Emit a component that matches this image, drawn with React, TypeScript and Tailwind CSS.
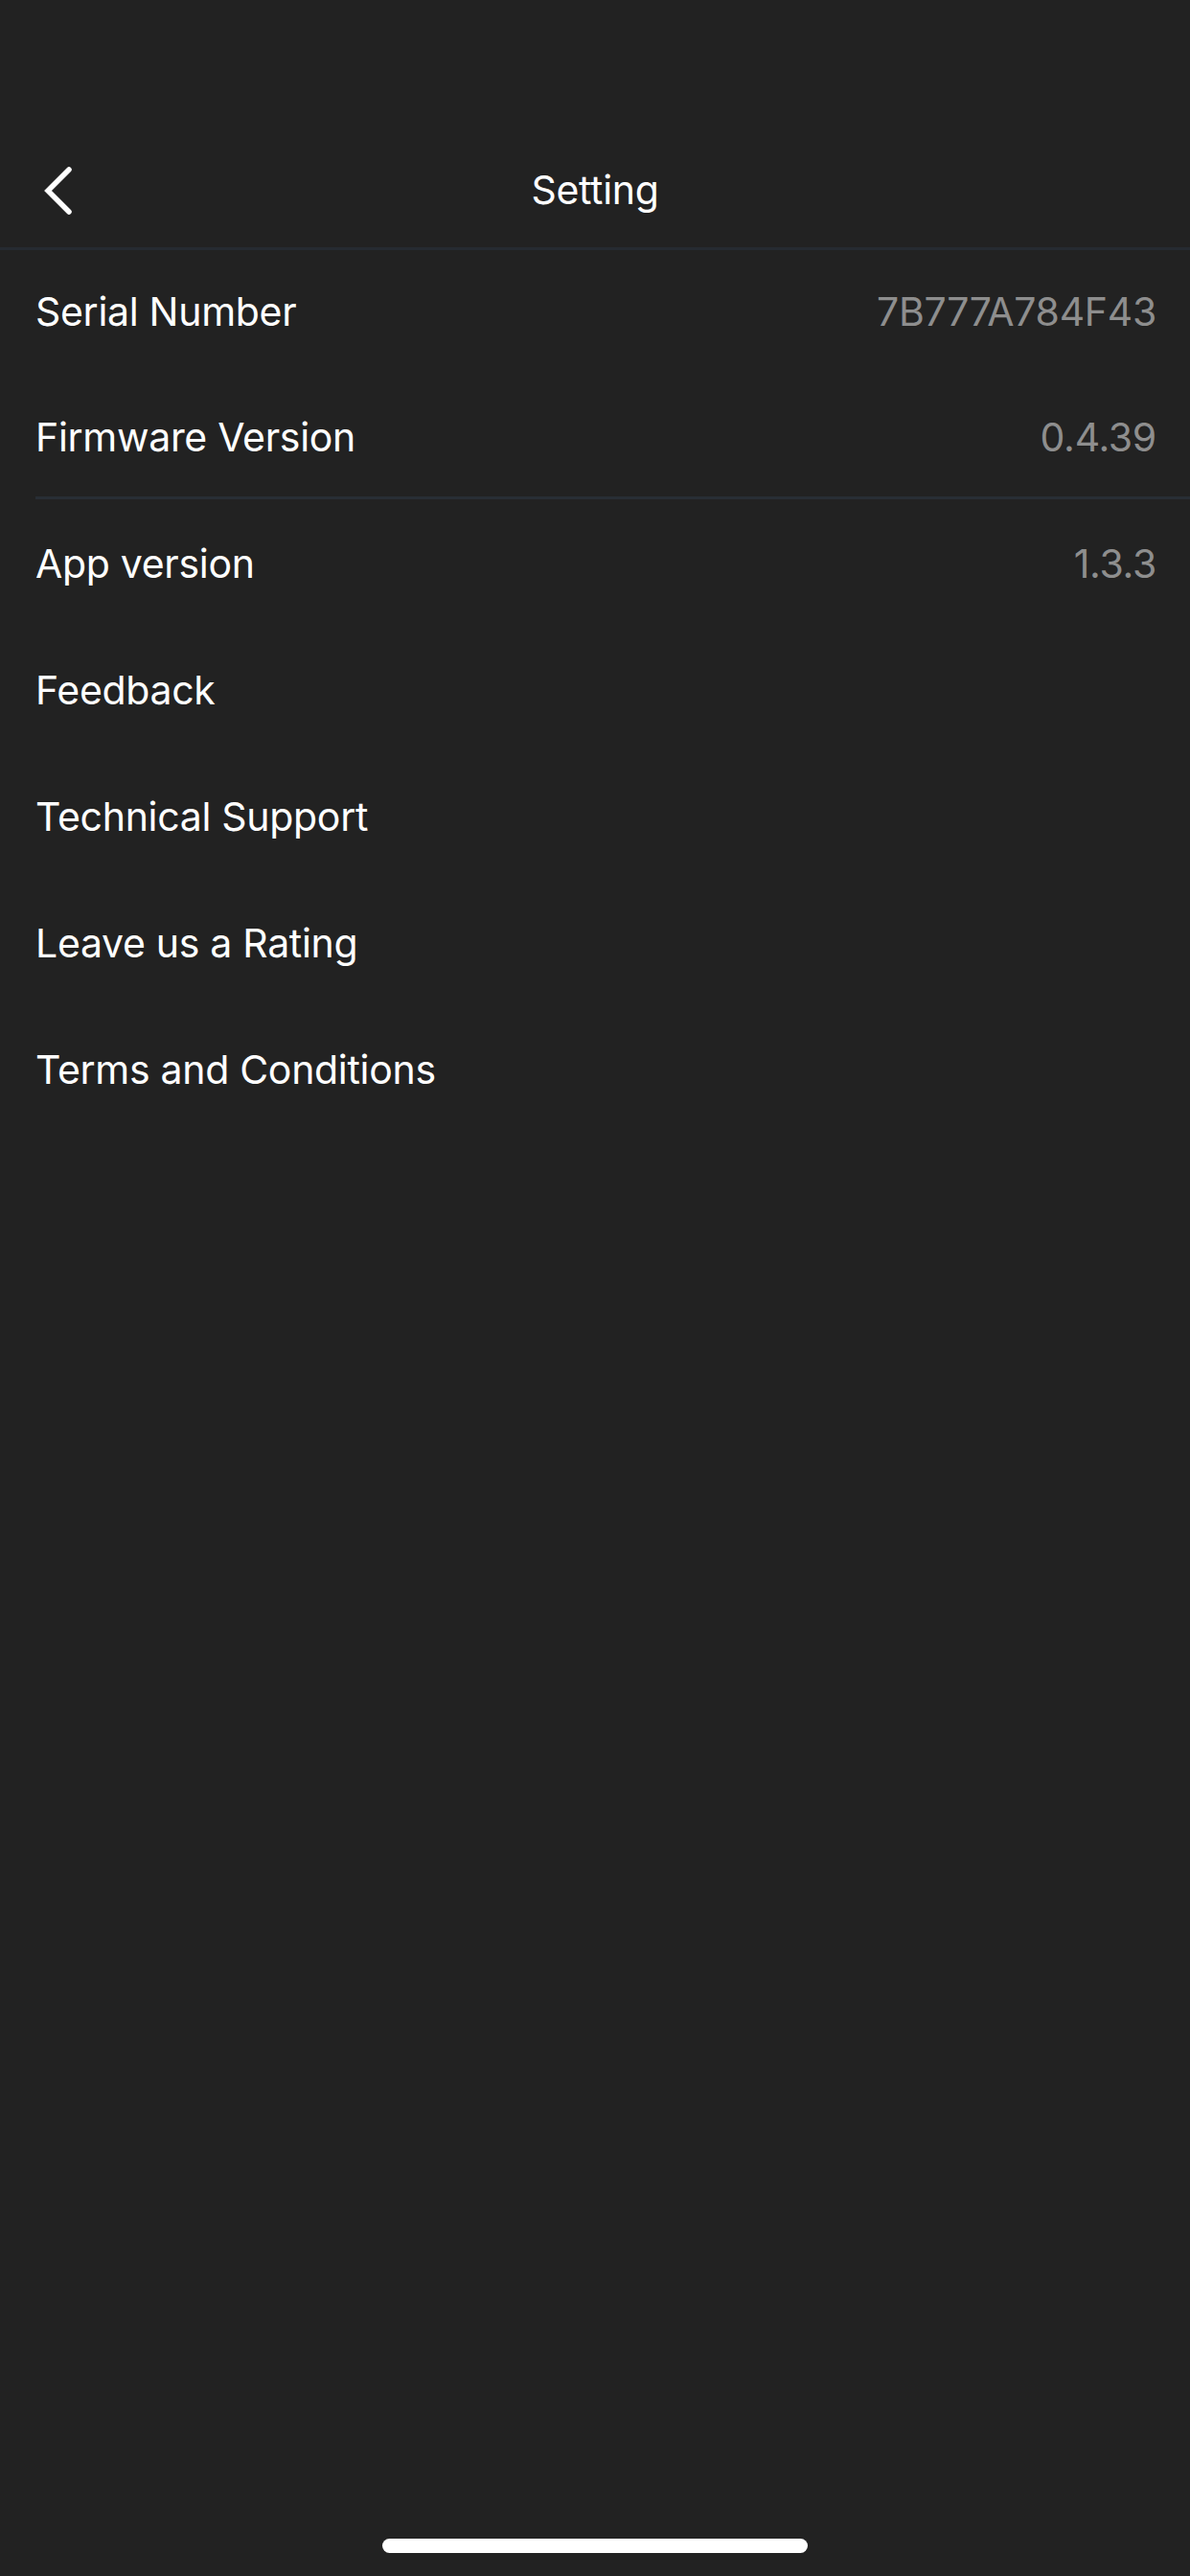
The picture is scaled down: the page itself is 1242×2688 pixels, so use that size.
import React from "react";

const font = { fontFamily: 'Inter, "Noto Sans", sans-serif' };

function Row({
  label,
  value,
  className = "",
}: {
  label: string;
  value?: string;
  className?: string;
}) {
  return (
    <div className={`flex items-center justify-between pr-[35px] ${className}`}>
      <span className="text-[41px] text-white leading-none tracking-[-0.3px]">{label}</span>
      {value ? (
        <span className="text-[41px] text-[#8e8e8e] leading-none tracking-[-0.3px]">{value}</span>
      ) : null}
    </div>
  );
}

export default function App() {
  return (
    <div
      className="w-[1242px] h-[2688px] bg-[#222222] flex flex-col relative overflow-hidden"
      style={font}
    >
      <div className="h-[132px] shrink-0" />
      <div className="h-[129px] shrink-0 border-b-[3px] border-[#262b31] pt-[6px] relative flex items-center justify-center">
        <div className="absolute left-[44px] top-[41px]">
          <svg width="34" height="52" viewBox="0 0 34 52" fill="none">
            <path
              d="M28 4 L6 26 L28 48"
              stroke="#ffffff"
              strokeWidth="5.5"
              strokeLinecap="round"
              strokeLinejoin="miter"
            />
          </svg>
        </div>
        <span className="text-[41px] text-white leading-none tracking-[-0.3px]">Setting</span>
      </div>
      <div className="flex flex-col pl-[37px]">
        <Row label="Serial Number" value="7B777A784F43" className="h-[129px]" />
        <Row
          label="Firmware Version"
          value="0.4.39"
          className="h-[131px] pt-[4px] border-b-[3px] border-[#282e35]"
        />
        <Row label="App version" value="1.3.3" className="h-[133px] pt-[1px]" />
        <Row label="Feedback" className="h-[132px]" />
        <Row label="Technical Support" className="h-[132px]" />
        <Row label="Leave us a Rating" className="h-[132px]" />
        <Row label="Terms and Conditions" className="h-[132px]" />
      </div>
      <div className="flex-1" />
      <div className="flex justify-center pb-[24px]">
        <div className="w-[444px] h-[15px] rounded-full bg-white" />
      </div>
    </div>
  );
}
